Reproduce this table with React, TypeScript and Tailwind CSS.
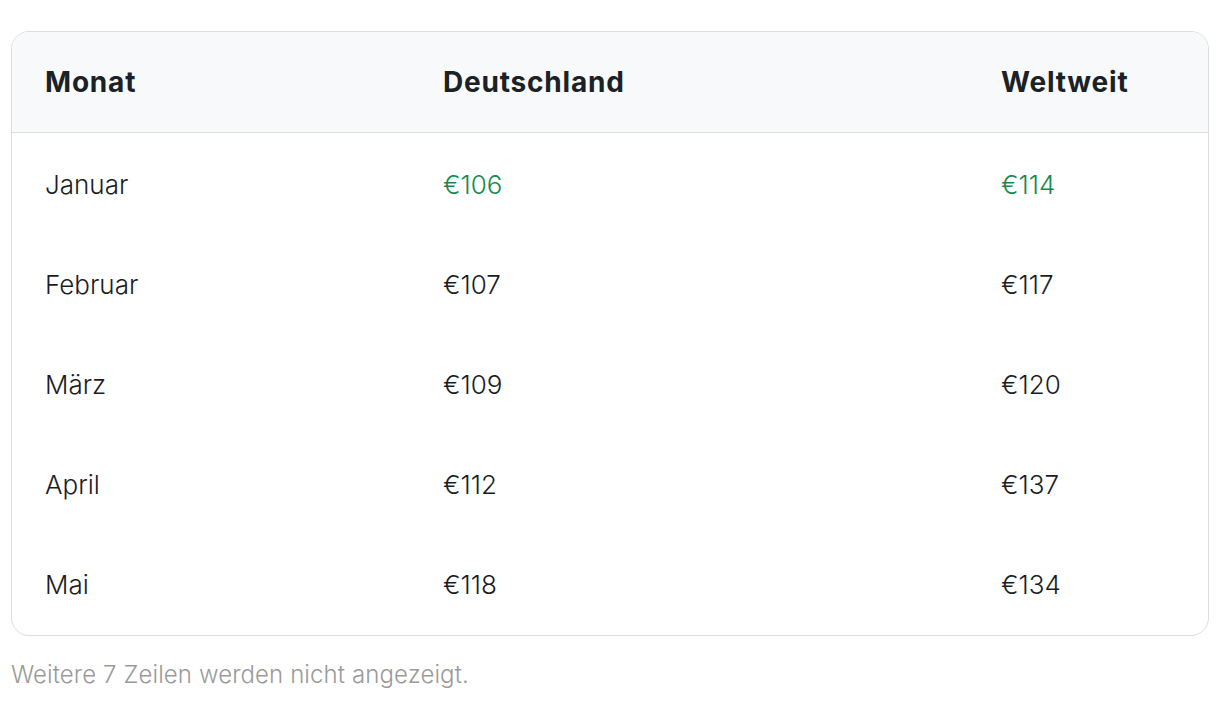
import React from "react";

const rows = [
  { m: "Januar", d: "€106", w: "€114", hl: true },
  { m: "Februar", d: "€107", w: "€117" },
  { m: "März", d: "€109", w: "€120" },
  { m: "April", d: "€112", w: "€137" },
  { m: "Mai", d: "€118", w: "€134" },
];

export default function App() {
  return (
    <div className="w-[1220px] h-[702px] bg-white pt-[31px] px-[11px]" style={{ fontFamily: "Inter, 'Noto Sans', sans-serif" }}>
      <div className="border border-[#dddddd] rounded-[18px] overflow-hidden">
        <div className="grid grid-cols-[398px_558px_1fr] h-[101px] bg-[#f8f9fa] border-b border-[#dddddd] items-center text-[28px] tracking-[0.8px] font-bold text-[#1a2226]">
          <div className="pl-[33px]">Monat</div>
          <div className="pl-[33px]">Deutschland</div>
          <div className="pl-[33px]">Weltweit</div>
        </div>
        <div className="py-[1px]">
          {rows.map((r) => (
            <div key={r.m} className="grid grid-cols-[398px_558px_1fr] h-[100px] items-center text-[26px] font-light text-[#1a1d1f]">
              <div className="pl-[33px]">{r.m}</div>
              <div className={"pl-[33px] " + (r.hl ? "text-[#1a8a4c]" : "")}>{r.d}</div>
              <div className={"pl-[33px] " + (r.hl ? "text-[#1a8a4c]" : "")}>{r.w}</div>
            </div>
          ))}
        </div>
      </div>
      <div className="mt-[21px] text-[24px] tracking-[0.1px] font-light text-[#9a9a9a]">Weitere 7 Zeilen werden nicht angezeigt.</div>
    </div>
  );
}
